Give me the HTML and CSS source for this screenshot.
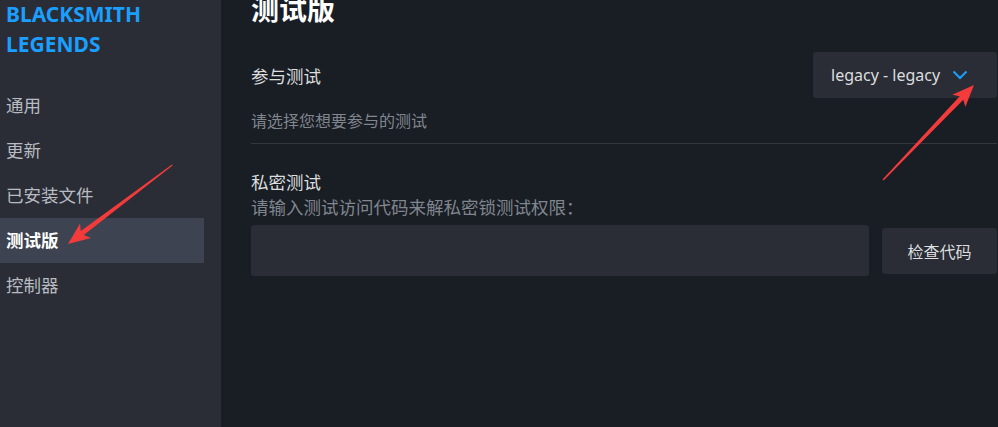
FILE: index.html
```html
<!DOCTYPE html>
<html lang="zh-CN">
<head>
    <meta charset="UTF-8">
    <meta name="viewport" content="width=device-width, initial-scale=1.0">
    <title>属性 - 测试版</title>
    <link rel="stylesheet" href="styles.css">
</head>
<body>
    <div class="layout">
        <aside class="sidebar">
            <div class="game-title">BLACKSMITH<br>LEGENDS</div>
            <ul class="menu">
                <li>通用</li>
                <li>更新</li>
                <li>已安装文件</li>
                <li class="active">测试版</li>
                <li>控制器</li>
            </ul>
        </aside>

        <main class="content">
            <h1>测试版</h1>

            <div class="beta-row">
                <span class="label">参与测试</span>
                <button class="dropdown">
                    <span>legacy - legacy</span>
                    <svg width="16" height="10" viewBox="0 0 16 10"><path d="M1.5 1.5 L8 8 L14.5 1.5" fill="none" stroke="#1a9fff" stroke-width="2"/></svg>
                </button>
            </div>
            <p class="hint">请选择您想要参与的测试</p>
            <div class="divider"></div>

            <div class="private">
                <div class="label">私密测试</div>
                <div class="desc">请输入测试访问代码来解私密锁测试权限：</div>
                <div class="code-row">
                    <input type="text" class="code-input">
                    <button class="check-btn">检查代码</button>
                </div>
            </div>
        </main>
    </div>

    <!-- annotation arrows from the screenshot -->
    <svg class="annotations" width="998" height="427" viewBox="0 0 998 427">
        <polygon points="172,164.5 172.6,165.6 83.8,235.1 91,237.9 68,244 80,223.5 80.8,231.1" fill="#f33b3b"/>
        <polygon points="882.5,179.5 883.6,180.4 963.3,99.7 965.3,107.1 974,85 952.3,94.7 959.7,96.3" fill="#f33b3b"/>
    </svg>
</body>
</html>
```

FILE: styles.css
```css
body {
    margin: 0;
    padding: 0;
    background-color: #191d24;
    font-family: "Noto Sans", "Noto Sans CJK SC", sans-serif;
    color: #dcdedf;
    overflow: hidden;
}
.layout {
    display: flex;
    height: 427px;
}
.sidebar {
    width: 221px;
    flex-shrink: 0;
    background-color: #2a2d36;
}
.game-title {
    padding: 0 0 0 6px;
    height: 84px;
    font-size: 21px;
    font-weight: bold;
    line-height: 30px;
    color: #1a9fff;
    margin-top: -1px;
}
.menu {
    list-style-type: none;
    margin: 0;
    padding: 0;
}
.menu li {
    width: 198px;
    height: 45px;
    line-height: 45px;
    padding-left: 6px;
    font-size: 17.5px;
    color: #b8bcc2;
}
.menu li.active {
    background-color: #3d4350;
    color: #ffffff;
    font-weight: bold;
}
.content {
    flex-grow: 1;
    padding: 0 1px 0 30px;
}
h1 {
    margin: -7px 0 0 0;
    font-size: 28px;
    line-height: 32px;
    font-weight: bold;
    color: #ffffff;
}
.beta-row {
    margin-top: 27px;
    display: flex;
    justify-content: space-between;
    align-items: center;
}
.label {
    font-size: 17.5px;
    color: #dcdedf;
}
.dropdown {
    width: 184px;
    height: 46px;
    display: flex;
    align-items: center;
    gap: 12px;
    padding: 0 0 0 18px;
    background-color: #2a2d36;
    border: none;
    border-radius: 3px;
    font-family: inherit;
    font-size: 16px;
    color: #dcdedf;
}
.hint {
    margin: 13px 0 0 0;
    font-size: 16px;
    line-height: 20px;
    color: #80868e;
}
.divider {
    margin-top: 12px;
    height: 1px;
    background-color: #33363e;
}
.private {
    margin-top: 27px;
}
.private .label {
    line-height: 22px;
}
.desc {
    margin-top: 3px;
    font-size: 17.5px;
    line-height: 22px;
    color: #80868e;
}
.code-row {
    margin-top: 7px;
    display: flex;
    align-items: center;
    gap: 13px;
}
.code-input {
    width: 618px;
    height: 51px;
    box-sizing: border-box;
    background-color: #2a2d36;
    border: none;
    border-radius: 3px;
    color: #dcdedf;
}
.check-btn {
    width: 115px;
    height: 46px;
    background-color: #2a2d36;
    border: none;
    border-radius: 3px;
    font-family: inherit;
    font-size: 16px;
    color: #dcdedf;
}
.annotations {
    position: absolute;
    top: 0;
    left: 0;
    pointer-events: none;
}
```
